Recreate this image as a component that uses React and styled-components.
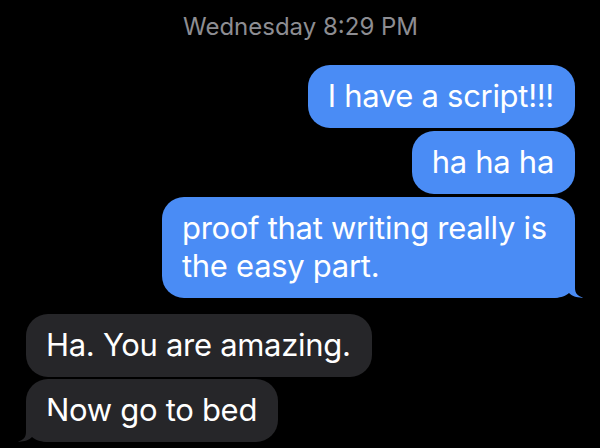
import React from 'react';
import styled, { createGlobalStyle } from 'styled-components';

const GlobalStyle = createGlobalStyle`
  html, body {
    margin: 0;
    padding: 0;
    background: #000;
  }
  body {
    font-family: Inter, "Noto Sans", sans-serif;
    -webkit-font-smoothing: antialiased;
  }
`;

const Thread = styled.div`
  width: 600px;
  height: 448px;
  overflow: hidden;
  background: #000;
  display: flex;
  flex-direction: column;
  padding: 12px 25px 0 26px;
  box-sizing: border-box;
`;

const Stamp = styled.div`
  text-align: center;
  color: #8d8d92;
  font-size: 24px;
  line-height: 30px;
  margin-bottom: 23px;
`;

const Group = styled.div`
  display: flex;
  flex-direction: column;
  align-items: ${({ $mine }) => ($mine ? 'flex-end' : 'flex-start')};
  gap: ${({ $mine }) => ($mine ? '3px' : '2px')};
  margin-bottom: 16px;
`;

const Bubble = styled.div`
  position: relative;
  box-sizing: border-box;
  max-width: 413px;
  padding: 12px 21px 13px 20px;
  border-radius: 22px;
  font-size: 31px;
  line-height: 38px;
  letter-spacing: -0.3px;
  color: #fff;
  background: ${({ $mine }) => ($mine ? '#4a8cf5' : '#262629')};
`;

const Tail = styled.svg`
  position: absolute;
  bottom: 0;
  width: 40px;
  height: 26px;
  ${({ $mine }) => ($mine ? 'right: -10px;' : 'left: -10px; transform: scaleX(-1);')}
`;

const BubbleTail = ({ mine }) => (
  <Tail $mine={mine} viewBox="0 0 40 26">
    <path
      d="M0 0 H30 V16 C30 21 32.5 24.3 38.5 25.6 C33 26 27 24.5 24 21 C21 24 15 26 6 26 H0 Z"
      fill={mine ? '#4a8cf5' : '#262629'}
    />
  </Tail>
);

const messages = [
  {
    mine: true,
    items: ['I have a script!!!', 'ha ha ha', 'proof that writing really is the easy part.'],
  },
  {
    mine: false,
    items: ['Ha. You are amazing.', 'Now go to bed'],
  },
];

const App = () => (
  <>
    <GlobalStyle />
    <Thread>
      <Stamp>Wednesday 8:29 PM</Stamp>
      {messages.map((group, gi) => (
        <Group key={gi} $mine={group.mine}>
          {group.items.map((text, i) => (
            <Bubble key={i} $mine={group.mine}>
              {text}
              {i === group.items.length - 1 && <BubbleTail mine={group.mine} />}
            </Bubble>
          ))}
        </Group>
      ))}
    </Thread>
  </>
);

export default App;
